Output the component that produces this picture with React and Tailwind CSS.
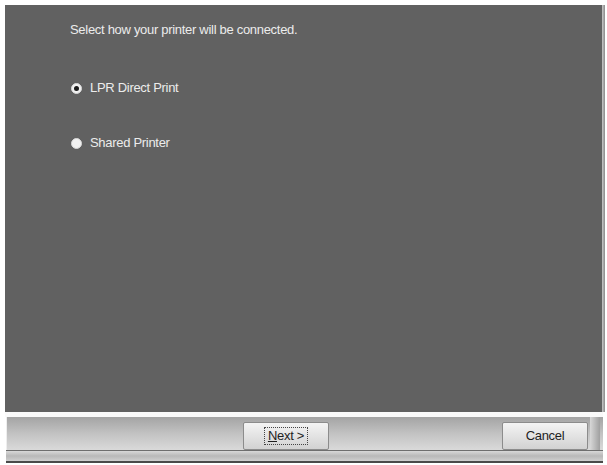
export default function App() {
  const font = { fontFamily: '"Liberation Sans", Arial, sans-serif' };
  return (
    <div className="w-[607px] h-[465px] bg-white flex flex-col" style={font}>
      <div className="flex pt-[5px] pl-[5px] h-[412px]">
        <div className="w-[597px] h-[407px] bg-[#616161] flex flex-col text-[#ececec] text-[13px]">
          <div className="pl-[65px] pt-[17px] leading-[16px] tracking-[-0.3px]">Select how your printer will be connected.</div>
          <div className="pl-[66px] pt-[43px] flex flex-col gap-[41px]">
            <label className="flex items-center gap-[8px] h-[14px] tracking-[-0.3px]">
              <span className="w-[11px] h-[11px] rounded-full bg-[#f2f2f2] border border-[#d8d8d8] flex items-center justify-center">
                <span className="w-[5px] h-[5px] rounded-full bg-[#1a1a1a]" />
              </span>
              LPR Direct Print
            </label>
            <label className="flex items-center gap-[8px] h-[14px] tracking-[-0.3px]">
              <span className="w-[11px] h-[11px] rounded-full bg-[#f2f2f2] border border-[#d8d8d8]" />
              Shared Printer
            </label>
          </div>
        </div>
        <div className="w-[3px] h-[407px] bg-gradient-to-r from-[#c8c8c8] to-[#8a8a8a]" />
      </div>
      <div className="h-[5px] ml-[5px] w-[598px] bg-[#fafafa]" />
      <div className="ml-[6px] w-[597px] h-[33px] bg-gradient-to-b from-[#a4a4a4] via-[#c2c2c2] to-[#dadada] border-l border-[#eeeeee] flex items-center relative">
        <div className="absolute left-[236px] top-[5px] w-[86px] h-[28px] bg-gradient-to-b from-[#f4f4f4] to-[#d2d2d2] border border-[#8c8c8c] rounded-[2px] flex items-center justify-center">
          <span className="border border-dotted border-[#444] px-[3px] text-[13px] leading-[16px] text-[#1e1e1e] tracking-[-0.3px]">
            <span className="underline">N</span>ext &gt;
          </span>
        </div>
        <div className="absolute left-[495px] top-[5px] w-[86px] h-[28px] bg-gradient-to-b from-[#f4f4f4] to-[#d2d2d2] border border-[#8c8c8c] rounded-[2px] flex items-center justify-center text-[13px] text-[#1e1e1e] tracking-[-0.3px]">
          Cancel
        </div>
        <div className="absolute right-[3px] top-0 w-[10px] h-[33px] bg-gradient-to-r from-[#d8d8d8] to-[#a0a0a0]" />
      </div>
      <div className="ml-[6px] w-[597px] h-[1px] bg-[#6e6e6e]" />
      <div className="ml-[6px] w-[597px] h-[10px] bg-gradient-to-b from-[#d8d8d8] via-[#b8b8b8] to-[#cfcfcf]" />
      <div className="ml-[6px] w-[597px] h-[2px] bg-[#4a4a4a]" />
    </div>
  );
}
